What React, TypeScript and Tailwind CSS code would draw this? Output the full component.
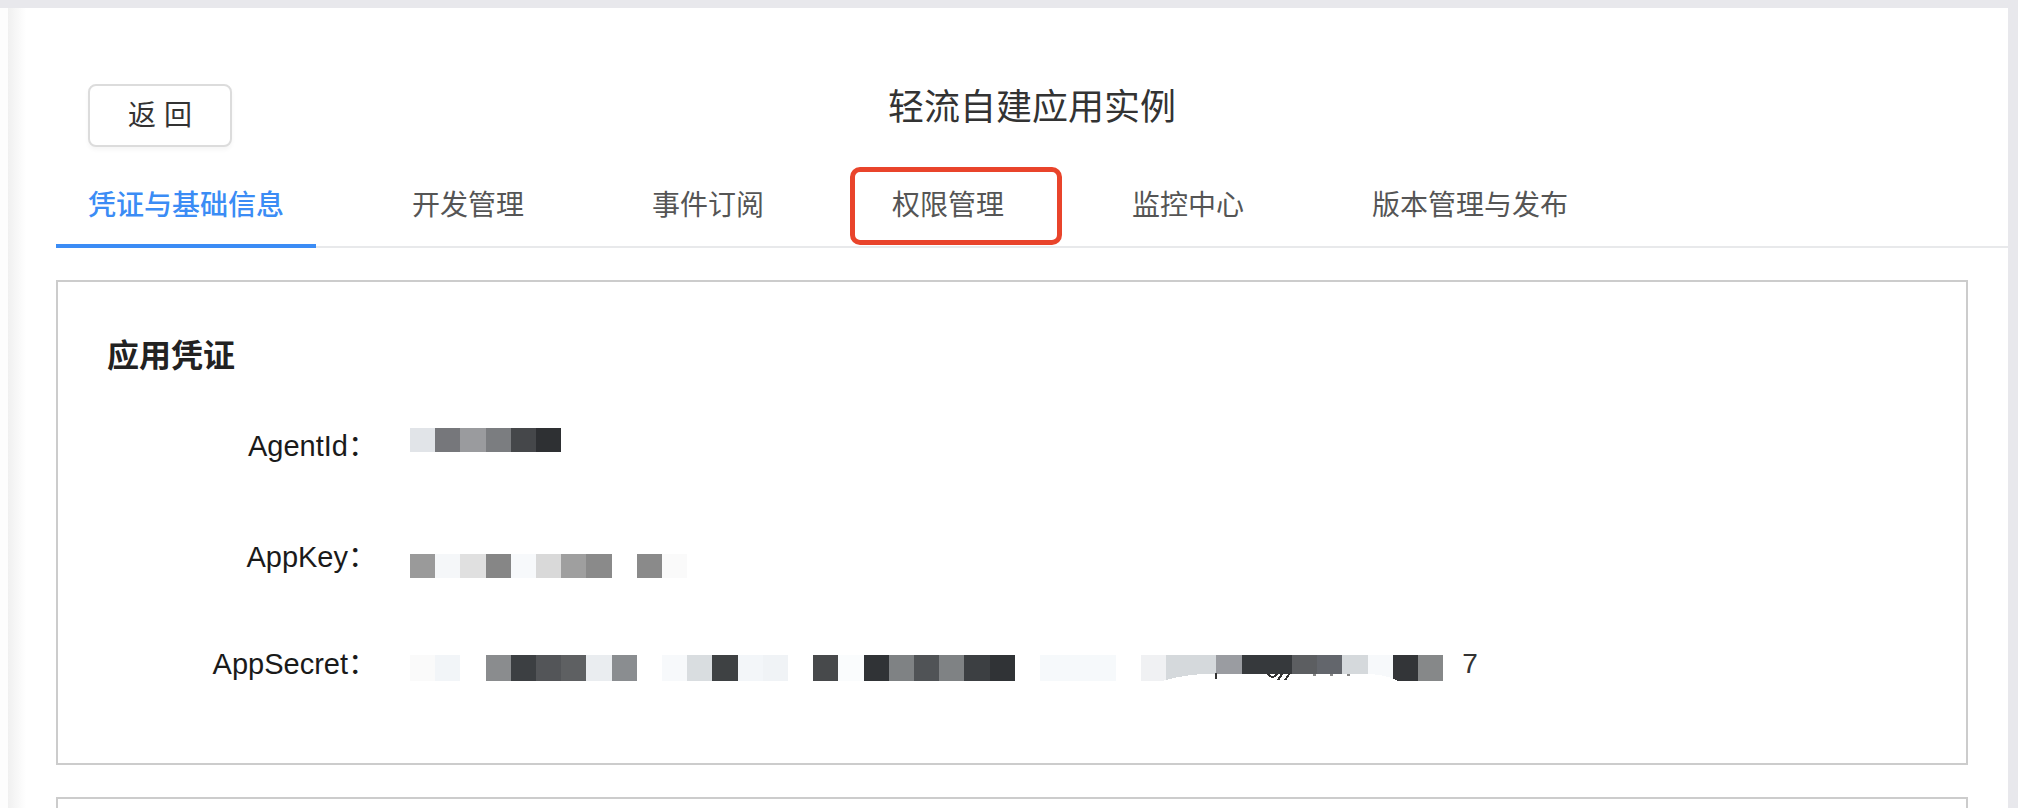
const tabs = ["凭证与基础信息", "开发管理", "事件订阅", "权限管理", "监控中心", "版本管理与发布"];

const agentId = ["#e1e4e8", "#76777b", "#9a9b9e", "#7b7d80", "#45474a", "#2e3033"];

const appKey = [
  "#9a9a9a", "#f5f7f9", "#e0e0e0", "#868686", "#f7f9fb", "#d9d9d9",
  "#9f9f9f", "#8a8a8a", "#ffffff", "#8a8a8a", "#fafafa",
];

const appSecret = [
  "#fafafa", "#f2f5f8", "#ffffff", "#8a8c8e", "#3c3f42", "#535558", "#5e6062", "#eaedf0",
  "#8a8d90", "#ffffff", "#f7f9fb", "#d9dde0", "#3e4143", "#f3f6f9", "#f0f3f6", "#ffffff",
  "#47494b", "#fafcfd", "#303336", "#7f8284", "#505356", "#7f8284", "#3c3f42", "#303336",
  "#ffffff", "#f6f9fb", "#f6f9fb", "#f6f9fb", "#ffffff", "#f0f1f3", "#d5d9dc", "#d5d9dc",
  "#9a9ca1", "#36393c", "#36393c", "#5c5e61", "#63666c", "#d5d9dc", "#f7f9fb", "#333538",
  "#868889",
];

const STEP = 25.2;

// pixelated (masked) value
function Mosaic({
  colors,
  height,
  className,
  children,
}: {
  colors: string[];
  height: number;
  className?: string;
  children?: React.ReactNode;
}) {
  const width = colors.length * STEP;
  return (
    <svg
      width={width}
      height={height}
      viewBox={`0 0 ${width} ${height}`}
      className={className}
      shapeRendering="crispEdges"
    >
      {colors.map((c, i) => (
        <rect key={i} x={i * STEP} y={0} width={STEP + 0.4} height={height} fill={c} />
      ))}
      {children}
    </svg>
  );
}

function Row({
  label,
  className,
  children,
}: {
  label: string;
  className: string;
  children: React.ReactNode;
}) {
  return (
    <div className={`flex items-start ${className}`}>
      <div className="w-[270px] shrink-0 text-right font-['Liberation_Sans','Noto_Sans_CJK_SC',sans-serif] text-[29px] leading-[40px] text-[#1a1a1a]">
        {label}
      </div>
      <div className="ml-[33px] flex items-start">{children}</div>
    </div>
  );
}

export default function App() {
  return (
    <div className="flex h-[808px] w-full flex-col overflow-hidden bg-[#e8e8ec] pt-[8px] pr-[10px] font-['Noto_Sans_CJK_SC',sans-serif]">
      <main className="flex-1 overflow-hidden bg-[linear-gradient(90deg,#fdfdfd_0px,#fdfdfd_8px,#f0f0f0_8px,#ffffff_26px)] pl-[56px]">
        {/* header */}
        <div className="grid grid-cols-[1fr_auto_1fr] items-start pt-[76px]">
          <div>
            <button className="ml-[32px] h-[63px] w-[144px] rounded-[8px] border-2 border-[#dcdcdc] bg-white font-['Liberation_Sans','Noto_Sans_CJK_SC',sans-serif] text-[28px] leading-none text-[#333] shadow-[0_3px_4px_rgba(0,0,0,0.04)]">
              返&nbsp;回
            </button>
          </div>
          <h1 className="mt-[2px] text-[36px] font-normal leading-[36px] text-[#333]">
            轻流自建应用实例
          </h1>
          <div />
        </div>

        {/* tabs */}
        <div className="flex items-start gap-[64px] border-b-2 border-[#e8e9eb]">
          {tabs.map((t, i) => (
            <div
              key={t}
              className={
                i === 0
                  ? "relative -mb-[2px] whitespace-nowrap border-b-4 border-[#3b8cf5] px-[32px] pt-[42px] pb-[27px] text-[28px] font-medium leading-[28px] text-[#3b8cf5]"
                  : "relative whitespace-nowrap px-[32px] pt-[42px] pb-[27px] text-[28px] leading-[28px] text-[#555]"
              }
            >
              {t}
              {t === "权限管理" && (
                <span className="pointer-events-none absolute -left-[10px] -right-[26px] top-[20px] -bottom-[1px] rounded-[10px] border-[5px] border-[#e9442b]" />
              )}
            </div>
          ))}
        </div>

        {/* credentials card */}
        <section className="mr-[40px] mt-[32px] h-[485px] border-2 border-[#cccccc] pl-[49px] pt-[55px]">
          <h2 className="text-[32px] font-bold leading-[32px] text-[#222]">应用凭证</h2>

          <Row label="AgentId：" className="mt-[57px]">
            <Mosaic colors={agentId} height={24} className="mt-[2px]" />
          </Row>

          <Row label="AppKey：" className="mt-[71px]">
            <Mosaic colors={appKey} height={24} className="mt-[17px]" />
          </Row>

          <Row label="AppSecret：" className="mt-[66px]">
            <Mosaic colors={appSecret} height={26} className="mt-[11px]">
              <path d="M752 26 Q780 18 806 19 L955 19 Q975 19 988 26 Z" fill="#ffffff" />
              <rect x={805} y={18} width={2.5} height={6} fill="#333" />
              <path d="M858 19 q4 6 9 0 M872 19 l-4 6 M880 18 l-5 7" stroke="#333" strokeWidth={2} fill="none" />
              <rect x={903} y={19} width={3} height={2} fill="#888" />
              <rect x={920} y={19} width={3} height={2} fill="#888" />
              <rect x={937} y={19} width={3} height={2} fill="#888" />
            </Mosaic>
            <span className="ml-[19px] font-['Liberation_Sans',sans-serif] text-[28px] leading-[40px] text-[#333]">
              7
            </span>
          </Row>
        </section>

        <section className="mr-[40px] mt-[32px] h-[120px] border-2 border-[#cccccc]" />
      </main>
    </div>
  );
}
